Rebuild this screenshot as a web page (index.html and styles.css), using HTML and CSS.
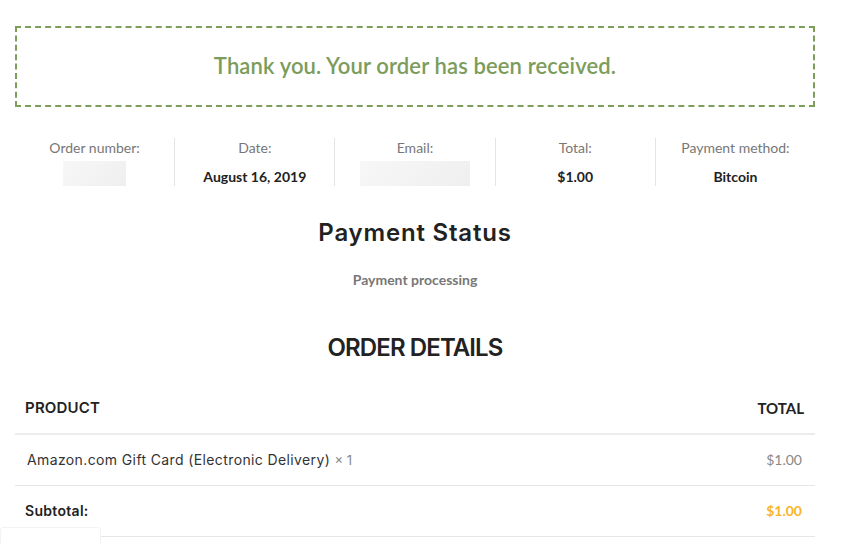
FILE: index.html
```html
<!DOCTYPE html>
<html lang="en">
<head>
<meta charset="utf-8">
<title>Order received</title>
<link rel="stylesheet" href="styles.css">
</head>
<body>
<div class="page">
  <p class="notice">Thank you. Your order has been received.</p>

  <ul class="overview">
    <li class="ov-item">
      <span class="ov-label">Order number:</span>
      <span class="ov-blur ov-blur-sm"></span>
    </li>
    <li class="ov-item">
      <span class="ov-label">Date:</span>
      <strong class="ov-value">August 16, 2019</strong>
    </li>
    <li class="ov-item">
      <span class="ov-label">Email:</span>
      <span class="ov-blur ov-blur-lg"></span>
    </li>
    <li class="ov-item">
      <span class="ov-label">Total:</span>
      <strong class="ov-value">$1.00</strong>
    </li>
    <li class="ov-item">
      <span class="ov-label">Payment method:</span>
      <strong class="ov-value">Bitcoin</strong>
    </li>
  </ul>

  <h2 class="status-title">Payment Status</h2>
  <p class="status-text">Payment processing</p>

  <h2 class="details-title">ORDER DETAILS</h2>

  <table class="details">
    <thead>
      <tr>
        <th class="col-product">PRODUCT</th>
        <th class="col-total">TOTAL</th>
      </tr>
    </thead>
    <tbody>
      <tr>
        <td class="col-product item-name">Amazon.com Gift Card (Electronic Delivery) <span class="qty">×&nbsp;1</span></td>
        <td class="col-total item-price">$1.00</td>
      </tr>
    </tbody>
    <tfoot>
      <tr>
        <th class="col-product foot-label">Subtotal:</th>
        <td class="col-total foot-value">$1.00</td>
      </tr>
    </tfoot>
  </table>
</div>
<div class="corner-widget"></div>
</body>
</html>
```
FILE: styles.css
```css
* { box-sizing: border-box; }

html, body {
  margin: 0;
  padding: 0;
  background: #fff;
}

body {
  font-family: "Lato", "Liberation Sans", sans-serif;
  color: #222;
  font-size: 14px;
}

.page {
  width: 800px;
  margin-left: 15px;
  padding-top: 26px;
}

.notice {
  margin: 0;
  border: 2px dashed #7d9e5b;
  padding: 23px 0 24px;
  line-height: 30px;
  text-align: center;
  font-size: 22px;
  font-weight: 600;
  letter-spacing: 0.12px;
  color: #7b9c5a;
}

.overview {
  list-style: none;
  margin: 31px 0 0;
  padding: 0;
  display: flex;
}

.ov-item {
  flex: 1;
  height: 48px;
  display: flex;
  flex-direction: column;
  align-items: center;
  border-right: 1px solid #e4e4e4;
}

.ov-item:last-child { border-right: none; }

.ov-label {
  line-height: 20px;
  font-size: 14px;
  color: #777;
}

.ov-value {
  margin-top: 9px;
  line-height: 20px;
  font-size: 14px;
  font-weight: 700;
  color: #222;
}

.ov-blur {
  margin-top: 3px;
  height: 30px;
  background: linear-gradient(135deg, #f7f7f7, #efefef);
}

.ov-blur-sm { width: 63px; }
.ov-blur-lg { width: 110px; }

.status-title,
.details-title {
  margin: 32px 0 0;
  text-align: center;
  font-family: "Inter", "Open Sans", sans-serif;
  font-weight: 600;
  font-size: 24px;
  line-height: 30px;
  color: #222;
}

.status-title {
  letter-spacing: 0.8px;
}

.status-text {
  margin: 22px 0 0;
  text-align: center;
  line-height: 20px;
  font-size: 14px;
  font-weight: 700;
  color: #777;
}

.details-title {
  margin-top: 43px;
  letter-spacing: -0.9px;
}

.details {
  width: 100%;
  margin-top: 20px;
  border-collapse: collapse;
  font-family: "Inter", "Open Sans", sans-serif;
}

.details th,
.details td {
  padding: 15px 10px;
  line-height: 20px;
  vertical-align: middle;
}

.details thead th {
  border-bottom: 2px solid #ececec;
  font-size: 15px;
  font-weight: 600;
  letter-spacing: 0.2px;
  color: #222;
}

.col-product { text-align: left; }

.col-total { text-align: right; padding-right: 11px !important; }

.details thead .col-total {
  font-family: "Lato", sans-serif;
  font-weight: 700;
  letter-spacing: 0;
}

.details tbody td,
.details tfoot th,
.details tfoot td {
  border-bottom: 1px solid #e6e6e6;
}

.item-name {
  padding-left: 12px !important;
  font-size: 14px;
  font-weight: 400;
  letter-spacing: 0.38px;
  color: #333;
}

.qty {
  color: #888;
  font-size: 13px;
  letter-spacing: 0;
}

.item-price {
  font-family: "Lato", sans-serif;
  font-size: 14px;
  color: #888;
  padding-right: 13px !important;
}

.foot-label {
  font-size: 14px;
  font-weight: 600;
  letter-spacing: 0.3px;
  color: #222;
}

.foot-value {
  font-family: "Lato", sans-serif;
  font-size: 14px;
  font-weight: 700;
  color: #f9b52c;
  padding-right: 13px !important;
}

.corner-widget {
  position: fixed;
  left: 0;
  top: 527px;
  width: 101px;
  height: 30px;
  border: 1px solid #f3f3f3;
  border-radius: 3px;
  background: #fff;
}
```
